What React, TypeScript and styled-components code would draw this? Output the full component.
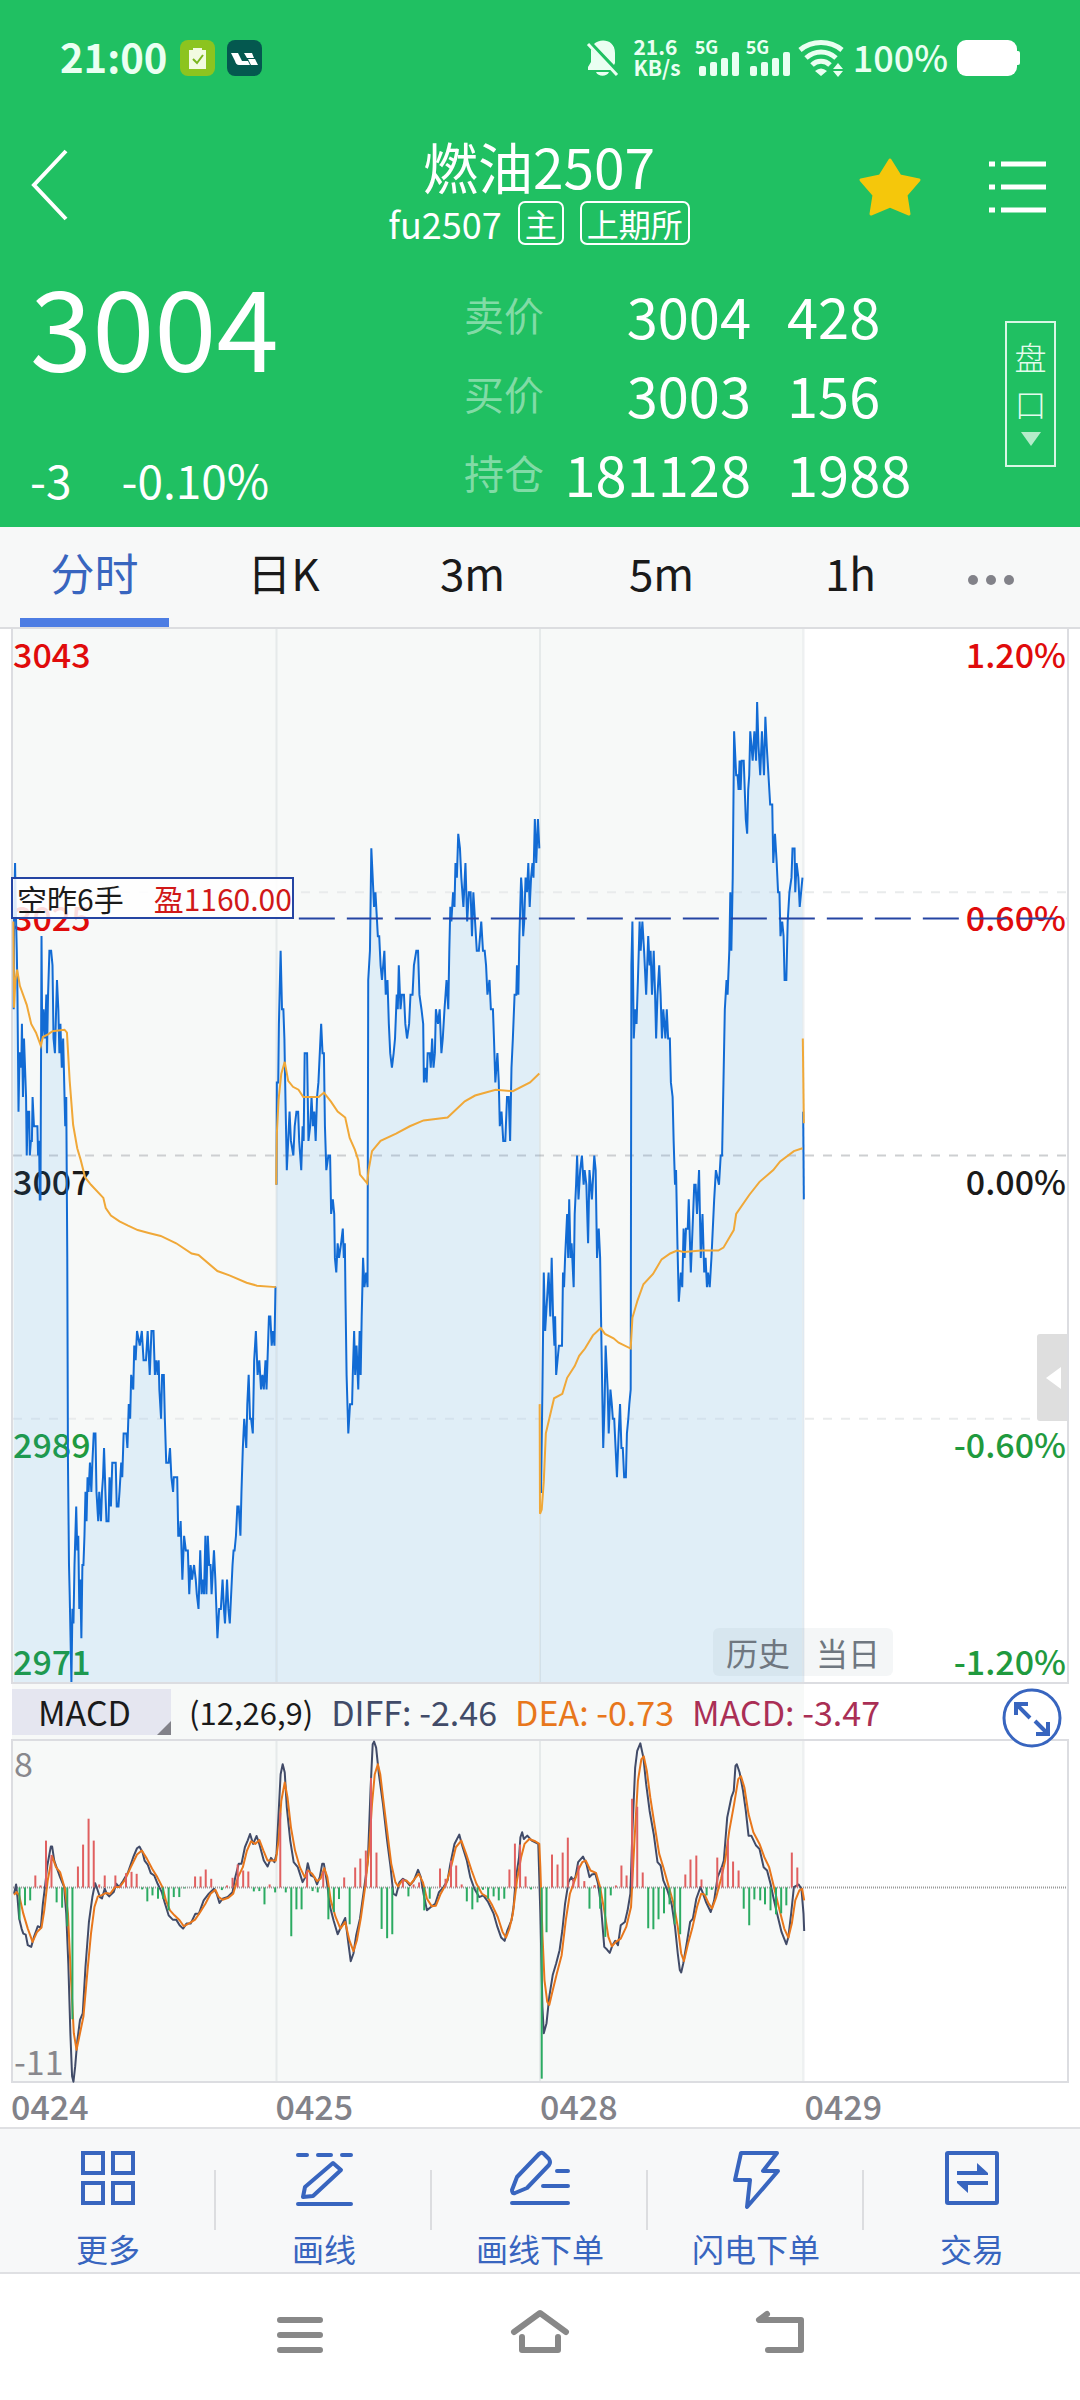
import React from 'react';
import styled, { createGlobalStyle } from 'styled-components';

/* ---------- market data ---------- */

type Pt = [number, number];

// One trading day is 767 slots wide, four days fit across the plot.
const DAY = 767;
const SPAN = DAY * 4;
const HIGH = 3043;
const LOW = 2971;
const ENTRY = 3023.2;

const offset = (pts: Pt[], dx: number): Pt[] => pts.map(([x, y]) => [x + dx, y]);

const price24: Pt[] = [[37,3017],[38,3023],[41,3027],[43,3024],[46,3021],[48,3018],[51,3010],[54,3014],[57,3014],[59,3013],[61,3016],[64,3011],[67,3015],[70,3013],[73,3011],[75,3007],[78,3010],[82,3010],[84,3007],[87,3008],[90,3008],[92,3011],[96,3009],[106,3009],[108,3007],[111,3008],[113,3004],[115,3004],[118,3022],[120,3015],[124,3017],[128,3015],[132,3018],[134,3014],[137,3018],[141,3021],[146,3021],[150,3020],[153,3015],[157,3014],[163,3019],[167,3017],[170,3014],[173,3016],[177,3013],[181,3015],[184,3012],[187,3009],[190,3011],[193,3000],[195,2986],[198,2979],[200,2977],[205,2971],[208,2976],[211,2975],[214,2979],[219,2983],[222,2980],[225,2981],[228,2976],[231,2978],[234,2974],[237,2979],[240,2979],[243,2981],[246,2984],[249,2982],[252,2985],[255,2984],[259,2986],[263,2984],[266,2986],[270,2988],[275,2988],[278,2984],[283,2982],[286,2984],[291,2982],[294,2984],[297,2985],[300,2987],[304,2984],[307,2982],[313,2982],[316,2985],[320,2983],[324,2986],[334,2986],[337,2983],[342,2983],[345,2984],[350,2986],[353,2985],[357,2988],[365,2988],[368,2987],[372,2990],[376,2989],[379,2992],[385,2991],[388,2994],[392,2993],[396,2995],[404,2994],[410,2995],[415,2993],[422,2993],[427,2995],[433,2992],[438,2995],[444,2995],[448,2992],[452,2993],[456,2992],[459,2993],[461,2991],[466,2989],[469,2992],[474,2992],[477,2989],[481,2986],[488,2986],[492,2987],[496,2985],[501,2984],[503,2985],[513,2985],[516,2981],[520,2981],[523,2982],[528,2978],[533,2981],[538,2980],[544,2980],[548,2977],[552,2979],[556,2978],[562,2979],[567,2978],[570,2977],[575,2976],[580,2980],[584,2977],[588,2978],[591,2977],[595,2981],[598,2977],[602,2981],[606,2979],[610,2979],[613,2977],[620,2980],[624,2978],[630,2974],[635,2976],[640,2976],[645,2978],[649,2976],[652,2975],[658,2978],[662,2976],[666,2975],[670,2977],[674,2979],[677,2980],[680,2980],[684,2981],[688,2983],[692,2983],[697,2981],[700,2984],[704,2987],[708,2989],[714,2987],[717,2990],[721,2992],[725,2989],[728,2989],[733,2988],[737,2993],[742,2995],[747,2992],[752,2993],[757,2991],[761,2992],[765,2991],[770,2993],[773,2991],[780,2996],[784,2996],[788,2994],[792,2995],[796,2994],[799,2998],[801,2998]];

const price25: Pt[] = [[802,3005],[803,3012],[807,3012],[809,3016],[814,3021],[818,3017],[822,3017],[825,3015],[828,3011],[832,3006],[836,3008],[840,3010],[844,3008],[851,3007],[855,3009],[860,3010],[865,3010],[868,3008],[874,3006],[878,3009],[881,3008],[884,3014],[891,3014],[895,3008],[900,3009],[904,3011],[908,3009],[912,3010],[916,3008],[920,3011],[924,3012],[928,3014],[932,3016],[936,3014],[940,3014],[943,3009],[947,3006],[953,3007],[958,3007],[961,3003],[966,3004],[970,3003],[972,3000],[976,2999],[980,3001],[984,3000],[990,3001],[995,3002],[998,3000],[1001,3001],[1003,2997],[1006,2992],[1011,2988],[1016,2990],[1022,2990],[1024,2992],[1028,2995],[1031,2992],[1035,2994],[1040,2991],[1044,2995],[1047,2992],[1050,2996],[1054,3000],[1058,2998],[1063,2999],[1067,2998],[1069,3019],[1074,3021],[1078,3028],[1082,3026],[1086,3024],[1090,3025],[1097,3022],[1101,3022],[1105,3020],[1109,3019],[1116,3021],[1120,3018],[1125,3019],[1129,3016],[1133,3014],[1138,3013],[1143,3014],[1147,3015],[1152,3018],[1155,3017],[1158,3020],[1163,3017],[1167,3018],[1173,3018],[1177,3016],[1182,3015],[1188,3016],[1192,3018],[1198,3018],[1202,3020],[1209,3021],[1214,3021],[1218,3018],[1224,3017],[1229,3016],[1231,3012],[1235,3013],[1239,3012],[1242,3014],[1248,3014],[1251,3013],[1255,3015],[1259,3013],[1263,3014],[1266,3017],[1272,3016],[1277,3017],[1282,3014],[1286,3015],[1291,3017],[1297,3019],[1302,3017],[1305,3021],[1308,3024],[1311,3023],[1316,3025],[1320,3024],[1323,3027],[1327,3026],[1331,3029],[1336,3028],[1340,3026],[1346,3024],[1352,3027],[1357,3023],[1362,3025],[1367,3025],[1371,3022],[1375,3025],[1380,3023],[1385,3021],[1391,3021],[1398,3023],[1403,3021],[1408,3021],[1412,3020],[1416,3018],[1422,3019],[1426,3017],[1432,3017],[1435,3015],[1439,3012],[1445,3014],[1449,3012],[1452,3009],[1457,3010],[1462,3008],[1468,3008],[1473,3011],[1478,3011],[1482,3008],[1486,3013],[1490,3015],[1495,3018],[1500,3018],[1502,3020],[1506,3018],[1509,3022],[1514,3026],[1517,3025],[1520,3022],[1523,3023],[1527,3026],[1531,3025],[1535,3027],[1539,3024],[1543,3026],[1547,3027],[1550,3026],[1554,3030],[1558,3027],[1563,3030],[1567,3028]];

const price28: Pt[] = [[1,2984],[4,2984],[8,2991],[12,2999],[16,2995],[21,2997],[26,2999],[31,2996],[35,3000],[39,2996],[43,2994],[45,2996],[48,2992],[52,2993],[56,2994],[65,2994],[68,2999],[71,2998],[74,3000],[80,3003],[83,3000],[86,3004],[90,3000],[93,3001],[99,2998],[102,3003],[106,3005],[109,3007],[113,3004],[118,3006],[123,3007],[128,3005],[131,3006],[136,3005],[141,3001],[145,3006],[152,3004],[159,3007],[163,3006],[167,3000],[172,3002],[176,3000],[180,2994],[185,2987],[189,2990],[192,2994],[198,2991],[201,2988],[206,2991],[210,2990],[213,2989],[217,2989],[221,2987],[225,2985],[230,2988],[234,2990],[238,2987],[242,2987],[246,2985],[251,2985],[254,2988],[258,2989],[261,2990],[265,2991],[267,3020],[270,3023],[274,3015],[278,3017],[282,3016],[286,3019],[291,3023],[294,3021],[299,3023],[304,3021],[310,3018],[316,3022],[320,3020],[323,3021],[327,3018],[332,3021],[336,3018],[339,3015],[343,3018],[348,3020],[352,3018],[356,3015],[360,3017],[363,3016],[366,3015],[370,3017],[374,3015],[379,3015],[382,3012],[387,3011],[390,3008],[394,3005],[397,3006],[401,3001],[405,2997],[411,2999],[415,2998],[419,3002],[422,3000],[426,3002],[431,3002],[434,3004],[440,2999],[445,3002],[450,3005],[454,3005],[458,3003],[464,3006],[469,3000],[474,3003],[479,2999],[483,3000],[487,2998],[490,2999],[495,2998],[500,3000],[504,3002],[508,3004],[513,3006],[522,3005],[527,3007],[531,3007],[535,3012],[539,3017],[544,3019],[547,3018],[552,3021],[555,3025],[558,3021],[562,3026],[566,3036],[572,3033],[576,3033],[579,3032],[582,3034],[585,3032],[588,3034],[594,3034],[597,3032],[600,3030],[604,3029],[607,3032],[610,3033],[613,3036],[620,3034],[625,3036],[630,3034],[633,3038],[637,3035],[642,3033],[647,3036],[653,3033],[657,3037],[661,3035],[666,3033],[671,3031],[677,3031],[680,3027],[685,3029],[690,3027],[694,3025],[698,3025],[701,3022],[706,3023],[710,3022],[713,3019],[718,3019],[722,3023],[727,3025],[733,3026],[736,3028],[742,3028],[744,3025],[748,3027],[753,3026],[757,3024],[761,3025],[765,3026]];

const average24: Pt[] = [[36,3023],[38,3017.1],[42,3019],[47,3019.7],[55,3018.6],[75,3017.3],[88,3016],[102,3015.4],[116,3014.5],[122,3015.1],[138,3015.3],[150,3015.5],[185,3015.6],[192,3015.4],[200,3012.1],[210,3009.1],[222,3007.5],[232,3006.7],[245,3005.5],[262,3005],[298,3004.1],[305,3003.4],[320,3002.9],[345,3002.5],[370,3002.2],[398,3001.9],[430,3001.7],[465,3001.5],[510,3001],[555,3000.3],[575,3000.2],[630,2999.1],[665,2998.8],[715,2998.3],[745,2998.1],[800,2998]];

const average25: Pt[] = [[801,3005],[803,3008.5],[808,3010.8],[816,3012.6],[826,3013.4],[836,3012.1],[850,3011.7],[866,3011.5],[880,3011],[925,3011],[940,3011.3],[960,3010.7],[980,3010],[1002,3009.6],[1015,3008.2],[1030,3007.4],[1040,3006.7],[1045,3005.7],[1066,3005.1],[1070,3006],[1080,3007.3],[1105,3008],[1150,3008.5],[1190,3009],[1230,3009.4],[1300,3009.6],[1350,3010.7],[1380,3011.1],[1440,3011.5],[1490,3011.4],[1540,3012],[1567,3012.6]];

const average28: Pt[] = [[0,2990],[1,2982.5],[6,2982.8],[12,2984.7],[18,2988],[30,2989.2],[42,2990.4],[66,2990.7],[80,2991.8],[102,2992.6],[115,2993.3],[132,2993.8],[155,2994.7],[178,2995.2],[190,2994.8],[215,2994.5],[230,2994.2],[265,2993.8],[270,2995.9],[285,2997.1],[302,2998.2],[330,2998.9],[355,2999.9],[380,3000.3],[400,3000.5],[420,3000.4],[470,3000.5],[520,3000.5],[535,3000.7],[565,3001.9],[572,3003],[610,3004.3],[640,3005.2],[680,3006],[700,3006.6],[740,3007.3],[765,3007.5]];

const average29: Pt[] = [[766,3015],[769,3009.2]];
const price29: Pt[] = [[767,3010],[769,3004]];

// Indicator values use a downward axis whose zero level is 621.
const ZERO = 621;

const diffEarly: Pt[] = [[38,640],[44,612],[48,650],[53,715],[60,745],[65,760],[72,763],[78,795],[88,800],[96,770],[103,750],[107,738],[116,742],[122,670],[128,620],[135,555],[145,498],[149,498],[155,540],[165,570],[172,590],[184,620],[190,700],[196,850],[202,1060],[207,1190],[211,1206],[216,1160],[222,1085],[230,1020],[238,1000],[246,860],[256,725],[266,650],[274,608],[280,625],[288,650],[294,654],[302,625],[308,640],[315,648],[328,635],[336,610],[344,620],[356,600],[370,575],[385,530],[396,503],[403,498],[412,515],[418,540],[427,552],[436,578],[446,585],[456,610],[468,635],[476,665],[488,705],[500,718],[510,718],[520,735],[530,745],[540,730],[552,730],[566,700],[576,700],[590,660],[605,640],[620,625],[628,640],[636,668],[645,655],[660,650],[674,635],[682,590],[692,550],[700,550],[710,500],[718,480],[725,460],[734,490],[744,466],[752,490],[765,540],[776,558],[786,532],[796,545],[802,520],[808,400],[814,280],[820,250],[826,275],[832,380],[842,480],[852,545],[864,560],[878,605],[886,590],[893,548],[902,585],[912,590],[920,612],[928,590],[935,550],[940,550],[948,600],[958,680],[968,720],[980,762],[992,735],[1002,713],[1010,780],[1018,843],[1026,820],[1034,765],[1045,715],[1055,640],[1068,540],[1076,320],[1082,190],[1086,182],[1092,200],[1100,280],[1112,370],[1124,480],[1134,560],[1142,640],[1150,645],[1160,605],[1170,595],[1180,602],[1190,615],[1202,600],[1214,568],[1222,590],[1230,640],[1240,690],[1254,678],[1264,670],[1275,635],[1288,620],[1300,600],[1308,550],[1320,490],[1334,462],[1344,500],[1356,540],[1366,590],[1378,625],[1392,650],[1404,645],[1418,665],[1434,700],[1445,740],[1456,772],[1466,782],[1474,750],[1486,720],[1492,680],[1498,600],[1508,530],[1512,470],[1517,455],[1522,475],[1532,465],[1545,480],[1564,490]];

const diffLate: Pt[] = [[2,700],[8,980],[12,1060],[20,1030],[28,950],[38,885],[48,850],[58,810],[66,750],[74,670],[84,605],[92,590],[98,600],[104,590],[112,545],[126,528],[136,550],[145,590],[152,582],[162,580],[170,610],[178,670],[188,800],[196,808],[204,818],[212,795],[220,782],[228,795],[236,735],[248,725],[256,690],[264,640],[270,450],[278,260],[284,210],[293,187],[302,230],[310,310],[320,390],[332,460],[343,545],[352,555],[360,600],[372,630],[384,670],[394,740],[402,820],[408,870],[412,877],[418,850],[428,790],[438,725],[446,715],[456,655],[468,620],[474,635],[484,665],[498,695],[508,660],[518,590],[530,560],[536,540],[546,410],[558,350],[565,330],[570,255],[574,250],[582,275],[592,330],[600,390],[608,465],[616,465],[630,495],[640,505],[652,560],[662,570],[672,610],[680,650],[690,695],[704,755],[718,792],[724,770],[732,700],[740,620],[754,612],[762,625],[768,700],[770,752]];

const deaEarly: Pt[] = [[38,643],[46,635],[53,645],[65,700],[78,745],[92,785],[105,755],[118,742],[126,690],[136,600],[149,527],[160,560],[172,575],[186,625],[195,700],[204,900],[212,1060],[220,1110],[228,1070],[240,1010],[252,870],[262,760],[272,680],[282,648],[292,645],[305,638],[318,640],[332,620],[345,620],[360,600],[378,560],[396,522],[410,510],[425,535],[440,565],[455,590],[470,620],[480,660],[492,690],[505,705],[520,720],[532,738],[550,728],[565,718],[580,695],[595,670],[610,640],[624,628],[634,650],[645,658],[662,652],[676,640],[690,590],[704,560],[716,510],[728,482],[740,490],[752,478],[764,510],[776,540],[788,540],[800,540],[808,480],[816,360],[826,305],[834,350],[844,440],[856,510],[870,560],[884,590],[894,570],[906,580],[920,602],[930,595],[941,563],[950,590],[960,660],[974,710],[988,745],[1002,725],[1014,780],[1026,813],[1036,780],[1048,710],[1060,620],[1072,500],[1080,370],[1088,280],[1097,250],[1104,280],[1112,350],[1124,450],[1136,550],[1148,605],[1156,618],[1168,600],[1180,600],[1192,612],[1204,595],[1216,580],[1228,605],[1240,655],[1254,678],[1266,676],[1280,640],[1296,610],[1310,560],[1324,500],[1340,480],[1354,520],[1370,570],[1384,610],[1400,640],[1416,650],[1430,675],[1446,710],[1460,755],[1470,772],[1480,745],[1490,700],[1502,600],[1514,530],[1524,490],[1538,475],[1555,482],[1567,490]];

const deaLate: Pt[] = [[2,560],[8,760],[14,900],[22,965],[28,975],[36,940],[50,880],[64,825],[76,720],[88,640],[102,600],[114,565],[124,545],[134,540],[148,570],[164,577],[176,620],[188,690],[200,770],[210,798],[222,785],[236,775],[252,740],[266,680],[276,480],[286,300],[296,235],[303,226],[312,270],[322,350],[334,430],[348,520],[360,560],[376,620],[390,670],[402,740],[412,820],[420,843],[432,790],[444,745],[458,680],[470,640],[480,642],[492,670],[502,684],[514,650],[528,595],[540,540],[552,450],[566,370],[578,295],[586,286],[596,320],[608,400],[622,455],[640,490],[654,530],[668,560],[682,620],[696,680],[712,745],[724,772],[734,730],[744,660],[756,630],[764,625],[770,660]];

const barsEarly: Pt[] = [[54,718],[70,675],[85,660],[100,585],[115,615],[131,480],[147,523],[162,666],[178,682],[193,738],[208,1018],[224,558],[239,492],[255,414],[270,480],[286,612],[302,585],[333,585],[348,615],[364,578],[380,574],[395,580],[411,627],[426,663],[441,645],[457,655],[472,655],[488,690],[503,650],[519,650],[534,624],[565,588],[581,588],[596,567],[612,595],[643,629],[658,615],[674,592],[689,552],[705,570],[720,573],[736,633],[752,632],[767,672],[782,612],[798,636],[813,396],[829,636],[845,768],[860,687],[875,687],[891,570],[907,632],[922,636],[938,573],[953,717],[969,695],[984,656],[999,591],[1015,732],[1031,561],[1046,534],[1062,510],[1077,291],[1093,516],[1108,746],[1124,774],[1139,762],[1170,595],[1186,648],[1201,612],[1217,606],[1232,690],[1248,655],[1278,564],[1294,595],[1310,540],[1325,555],[1341,612],[1356,663],[1372,687],[1387,666],[1403,628],[1418,655],[1434,648],[1449,660],[1465,655],[1480,567],[1496,489],[1511,492],[1527,588],[1543,627]];

const barsLate: Pt[] = [[6,1197],[20,756],[36,522],[52,552],[67,516],[82,471],[98,595],[113,555],[130,602],[145,685],[160,614],[176,685],[191,770],[207,645],[222,615],[238,555],[253,585],[269,354],[284,378],[300,576],[316,744],[331,747],[346,717],[362,699],[378,672],[393,732],[409,762],[424,582],[439,537],[456,525],[471,597],[486,645],[501,628],[517,531],[532,560],[548,480],[563,543],[579,570],[594,685],[610,735],[625,657],[642,660],[656,672],[672,690],[688,702],[703,699],[718,675],[734,516],[750,561]];

const EARLY = -35;
const LATE = 1533;

const priceDays = [offset(price24, EARLY), offset(price25, EARLY), offset(price28, LATE), offset(price29, LATE)];
const averageDays = [
  offset(average24, EARLY),
  offset(average25, EARLY),
  offset(average28, LATE),
  offset(average29, LATE),
];
const diffLine = [...offset(diffEarly, EARLY), ...offset(diffLate, LATE)];
const deaLine = [...offset(deaEarly, EARLY), ...offset(deaLate, LATE)];
const histogram = [...offset(barsEarly, EARLY), ...offset(barsLate, LATE)];

const priceY = (p: number) => (HIGH - p) * 10;
const PRICE_HEIGHT = priceY(LOW);
const toPath = (pts: Pt[]) => 'M' + pts.map(([x, y]) => `${x} ${y}`).join('L');
const pricePath = (pts: Pt[]) => toPath(pts.map(([x, p]) => [x, Math.round(priceY(p))]));
const areaPath = (pts: Pt[]) =>
  `${pricePath(pts)}L${pts[pts.length - 1][0]} ${PRICE_HEIGHT}L${pts[0][0]} ${PRICE_HEIGHT}Z`;

/* ---------- styles ---------- */

const GlobalStyle = createGlobalStyle`
  *, *::before, *::after { box-sizing: border-box; }
  body {
    margin: 0;
    background: #ffffff;
    color: #1a1a1a;
    font-family: "Noto Sans CJK SC", "Noto Sans", sans-serif;
  }
  button {
    margin: 0;
    padding: 0;
    border: 0;
    background: none;
    color: inherit;
    font: inherit;
  }
  svg { display: block; overflow: visible; }
`;

const Page = styled.div`
  display: flex;
  flex-direction: column;
  background: #ffffff;
`;

const Header = styled.header`
  background: #20c062;
  color: #ffffff;
`;

const StatusBar = styled.div`
  display: flex;
  align-items: center;
  justify-content: space-between;
  height: 116px;
  padding: 0 60px;
  color: #eafff2;
`;

const StatusGroup = styled.div<{ $gap: number }>`
  display: flex;
  align-items: center;
  gap: ${(p) => p.$gap}px;
`;

const Clock = styled.span`
  font-size: 40px;
  font-weight: 700;
  line-height: 40px;
  padding-bottom: 4px;
`;

const NetSpeed = styled.span`
  display: flex;
  flex-direction: column;
  margin: 0 7px 0 6px;
  padding-bottom: 2px;
  font-size: 21px;
  font-weight: 700;
  line-height: 21px;
`;

const Signal = styled.span`
  position: relative;
  display: block;
`;

const SignalLabel = styled.span`
  position: absolute;
  top: -3px;
  left: -2px;
  font-size: 18px;
  font-weight: 700;
  line-height: 18px;
`;

const BatteryText = styled.span`
  font-size: 36px;
  font-weight: 500;
  line-height: 36px;
  padding-bottom: 4px;
`;

const TitleBar = styled.div`
  display: grid;
  grid-template-columns: 1fr auto 1fr;
  align-items: center;
  height: 142px;
  padding: 0 34px 0 32px;
`;

const TitleActions = styled.div`
  display: flex;
  align-items: center;
  justify-content: flex-end;
  gap: 68px;
`;

const TitleBlock = styled.div`
  display: flex;
  flex-direction: column;
  align-items: center;
  gap: 6px;
  padding-top: 6px;
`;

const Title = styled.h1`
  margin: 0;
  font-size: 55px;
  font-weight: 400;
  line-height: 60px;
`;

const Subtitle = styled.div`
  display: flex;
  align-items: center;
  gap: 16px;
  font-size: 36px;
  line-height: 44px;
`;

const Tag = styled.span`
  padding: 0 5px;
  border: 2px solid #ffffff;
  border-radius: 7px;
  font-size: 32px;
  line-height: 40px;
`;

const Quote = styled.section`
  display: flex;
  padding: 17px 24px 15px 30px;
`;

const PriceBlock = styled.div`
  flex: 1;
  display: flex;
  flex-direction: column;
  justify-content: space-between;
`;

const LastPrice = styled.div`
  font-size: 112px;
  line-height: 96px;
`;

const Change = styled.div`
  display: flex;
  gap: 50px;
  font-size: 46px;
  line-height: 66px;
`;

const QuoteTable = styled.table`
  width: 445px;
  margin-right: 96px;
  border-collapse: collapse;
  table-layout: fixed;
  font-size: 56px;
  line-height: 79px;

  th, td { padding: 0; white-space: nowrap; }
  th {
    width: 82px;
    color: rgba(255, 255, 255, 0.45);
    font-size: 40px;
    font-weight: 400;
    text-align: left;
  }
`;

const PriceCell = styled.td`
  width: 205px;
  text-align: right;
`;

const SizeCell = styled.td`
  && { padding-left: 36px; }
`;

const DepthButton = styled.button`
  align-self: center;
  display: flex;
  flex-direction: column;
  align-items: center;
  gap: 10px;
  width: 51px;
  padding: 15px 0 19px;
  border: 2px solid #d9f7e5;
  color: #e4fbed;
  font-size: 32px;
  font-weight: 300;
  line-height: 37px;
`;

const Tabs = styled.nav`
  display: grid;
  grid-template-columns: repeat(5, minmax(0, 7fr)) minmax(0, 5fr);
  height: 102px;
  border-bottom: 2px solid #dcdde0;
  background: #f7f8f8;
`;

const Tab = styled.button<{ $active?: boolean }>`
  position: relative;
  padding-bottom: 10px;
  color: ${(p) => (p.$active ? '#3865bf' : '#1a1a1a')};
  font-size: 44px;

  &::after {
    content: '';
    position: absolute;
    right: 20px;
    bottom: 0;
    left: 20px;
    height: 9px;
    background: ${(p) => (p.$active ? '#4d7de3' : 'transparent')};
  }
`;

const MoreTab = styled.button`
  display: flex;
  align-items: center;
  justify-content: center;
  padding: 6px 43px 0 0;
`;

const Charts = styled.main`
  margin: 0 11px;
`;

const zones = 'linear-gradient(90deg, #f7f9f8 75%, #ffffff 75%)';

const PricePlot = styled.section`
  position: relative;
  height: 1055px;
  border: 2px solid #dcdde1;
  border-top: 0;
  background: ${zones};
`;

const PlotSvg = styled.svg`
  position: absolute;
  inset: 0;
  width: 100%;
  height: 100%;
`;

const Scale = styled.div`
  display: grid;
  grid-template-rows: repeat(4, 1fr);
  height: 100%;
  padding: 0 1px 0 0;
  font-size: 34px;
  font-weight: 500;
  line-height: 40px;
`;

const ScaleRow = styled.div`
  display: grid;
  grid-template-columns: 1fr 1fr;
  align-content: space-between;
  padding: 5px 0 1px;
`;

const ScaleLabel = styled.span<{ $tone: 'up' | 'flat' | 'down'; $right?: boolean }>`
  color: ${(p) => ({ up: '#e00b0b', flat: '#1a1a1a', down: '#1f9a3e' })[p.$tone]};
  text-align: ${(p) => (p.$right ? 'right' : 'left')};
`;

const PositionTag = styled.div`
  position: absolute;
  left: -2px;
  display: flex;
  gap: 30px;
  padding: 0 0 0 4px;
  border: 2px solid #2545a3;
  background: rgba(255, 255, 255, 0.86);
  font-size: 30px;
  line-height: 38px;
`;

const Profit = styled.span`
  color: #d01818;
`;

const RangeSwitch = styled.div`
  position: absolute;
  right: 174px;
  bottom: 6px;
  display: flex;
  border-radius: 6px;
  background: rgba(120, 140, 150, 0.08);
`;

const RangeButton = styled.button`
  width: 90px;
  color: #6f7780;
  font-size: 32px;
  line-height: 48px;
`;

const Drawer = styled.button`
  position: absolute;
  right: 0;
  bottom: 261px;
  width: 30px;
  height: 87px;
  border-radius: 3px 0 0 3px;
  background: #dedede;
`;

const IndicatorBar = styled.div`
  position: relative;
  display: flex;
  align-items: center;
  gap: 18px;
  height: 55px;
  margin: 0 1px;
  background: ${zones};
  font-size: 34px;
  line-height: 44px;
`;

const IndicatorButton = styled.button`
  position: relative;
  width: 159px;
  height: 46px;
  padding-right: 14px;
  background: #e5e6f0;
  line-height: 40px;

  &::after {
    content: '';
    position: absolute;
    right: 0;
    bottom: 0;
    border: 7px solid #828289;
    border-top-color: transparent;
    border-left-color: transparent;
  }
`;

const Params = styled.span`
  font-size: 31px;
`;

const Reading = styled.span<{ $color: string }>`
  color: ${(p) => p.$color};
`;

const ExpandButton = styled.button`
  position: absolute;
  top: 4px;
  right: 6px;
  z-index: 1;
`;

const MacdPlot = styled.section`
  position: relative;
  display: flex;
  flex-direction: column;
  justify-content: space-between;
  height: 344px;
  padding: 2px 1px 0;
  border: 2px solid #dcdde1;
  background: ${zones};
  color: #88888d;
  font-size: 34px;
  line-height: 40px;
`;

const Dates = styled.div`
  display: grid;
  grid-template-columns: repeat(4, 1fr);
  height: 44px;
  color: #828289;
  font-size: 34px;
  font-weight: 500;
  line-height: 46px;
`;

const Toolbar = styled.nav`
  display: flex;
  height: 147px;
  border: solid #dfe0e3;
  border-width: 2px 0;
  background: #f7f8f9;
`;

const ToolButton = styled.button`
  position: relative;
  flex: 1;
  display: flex;
  flex-direction: column;
  align-items: center;
  gap: 22px;
  padding-top: 19px;
  color: #3865bf;
  font-size: 32px;
  line-height: 36px;
  white-space: nowrap;

  & + &::before {
    content: '';
    position: absolute;
    top: 41px;
    left: -2px;
    width: 2px;
    height: 60px;
    background: #dcdde0;
  }
`;

const SystemNav = styled.nav`
  display: flex;
  align-items: center;
  justify-content: center;
  gap: 180px;
  height: 126px;
`;

/* ---------- icons ---------- */

const SignalIcon = () => (
  <Signal>
    <svg width="42" height="36" fill="currentColor" aria-hidden="true">
      <rect x="2" y="26" width="7" height="10" rx="2" />
      <rect x="13" y="22" width="7" height="14" rx="2" />
      <rect x="24" y="18" width="7" height="18" rx="2" />
      <rect x="35" y="12" width="7" height="24" rx="2" />
    </svg>
    <SignalLabel>5G</SignalLabel>
  </Signal>
);

const BellOffIcon = () => (
  <svg width="31" height="36" viewBox="0 0 31 36" fill="currentColor" aria-hidden="true">
    <path d="M7 4C13-2 28-1 28 13v10l-1 2zM4 9l21 21H1v-3l3-5zM9 32h13c-2 5-11 5-13 0z" />
    <path d="M1 4l29 31" stroke="currentColor" strokeWidth="3" />
  </svg>
);

const WifiIcon = () => (
  <svg width="45" height="36" viewBox="0 0 45 36" aria-hidden="true">
    <g fill="none" stroke="currentColor" strokeWidth="5">
      <path d="M1 10C13 0 31 0 43 10" />
      <path d="M7 18c9-8 21-8 30 0" />
      <path d="M13 25c5-5 13-5 18 0" />
    </g>
    <path d="M16 31q6-5 12 0l-6 5zM34 29l5-6 5 6zM34 31h10l-5 6z" fill="currentColor" />
  </svg>
);

const toolIcon = { width: 60, height: 60, viewBox: '0 0 60 60', 'aria-hidden': true } as const;
const toolStroke = {
  fill: 'none',
  stroke: 'currentColor',
  strokeWidth: 4,
  strokeLinecap: 'round',
  strokeLinejoin: 'round',
} as const;

const tools = [
  {
    label: '更多',
    icon: (
      <svg {...toolIcon} fill="none" stroke="currentColor" strokeWidth="4">
        <path d="M5 5h20v20H5zM35 5h20v20H35zM5 35h20v20H5zM35 35h20v20H35z" />
      </svg>
    ),
  },
  {
    label: '画线',
    icon: (
      <svg {...toolIcon} {...toolStroke}>
        <path d="M4 7h9M24 7h13M48 7h9M4 56h53M39 15l8 7-28 26-10 1 2-10z" />
      </svg>
    ),
  },
  {
    label: '画线下单',
    icon: (
      <svg {...toolIcon} {...toolStroke}>
        <path d="M2 55h56M47 23h11M33 38h25M29 6q3-3 6 1l4 4q2 3 0 6L17 40 5 45q-3 1-3-3l5-13z" />
      </svg>
    ),
  },
  {
    label: '闪电下单',
    icon: (
      <svg {...toolIcon} {...toolStroke}>
        <path d="M15 5h36L37 23h15L21 59l3-27H9z" />
      </svg>
    ),
  },
  {
    label: '交易',
    icon: (
      <svg {...toolIcon}>
        <rect x="5" y="5" width="50" height="50" rx="1" fill="none" stroke="currentColor" strokeWidth="4" />
        <path d="M15 23h20v-8l11 10v2H15zM15 33h31v4H26v8L15 35z" fill="currentColor" />
      </svg>
    ),
  },
];

/* ---------- charts ---------- */

const rows = [
  { price: '3043', pct: '1.20%', tone: 'up' },
  { price: '3025', pct: '0.60%', tone: 'up' },
  { price: '3007', pct: '0.00%', tone: 'flat' },
  { price: '2989', pct: '-0.60%', tone: 'down' },
] as const;

const DayLines = ({ top, height }: { top: number; height: number }) => (
  <>
    {[1, 2, 3].map((d) => (
      <path
        key={d}
        d={`M${d * DAY} ${top}v${height}`}
        stroke="rgba(90, 110, 120, 0.1)"
        strokeWidth="2"
        vectorEffect="non-scaling-stroke"
      />
    ))}
  </>
);

const PriceChart = () => (
  <PlotSvg viewBox={`0 0 ${SPAN} ${PRICE_HEIGHT}`} preserveAspectRatio="none" fill="none" aria-hidden="true">
    {[3025, 3007, 2989].map((p) => (
      <path
        key={p}
        d={`M0 ${priceY(p)}H${SPAN}`}
        stroke={p === 3007 ? '#cdcfd1' : '#e9ebec'}
        strokeWidth="2"
        strokeDasharray="9 9"
        vectorEffect="non-scaling-stroke"
      />
    ))}
    {priceDays.map((pts, i) => (
      <path key={i} d={areaPath(pts)} fill="rgba(30, 150, 245, 0.1)" />
    ))}
    <DayLines top={0} height={PRICE_HEIGHT} />
    {priceDays.map((pts, i) => (
      <path key={i} d={pricePath(pts)} stroke="#126bd4" strokeWidth="2" vectorEffect="non-scaling-stroke" />
    ))}
    {averageDays.map((pts, i) => (
      <path key={i} d={pricePath(pts)} stroke="#f0a838" strokeWidth="2" vectorEffect="non-scaling-stroke" />
    ))}
    <path
      d={`M832 ${priceY(ENTRY)}H${SPAN}`}
      stroke="#2545a3"
      strokeWidth="2"
      strokeDasharray="36 12"
      vectorEffect="non-scaling-stroke"
    />
  </PlotSvg>
);

const MacdChart = () => (
  <PlotSvg viewBox={`0 180 ${SPAN} 1024`} preserveAspectRatio="none" fill="none" aria-hidden="true">
    <DayLines top={180} height={1024} />
    <path
      d={`M0 ${ZERO}H${SPAN}`}
      stroke="#9a9a9a"
      strokeWidth="2"
      strokeDasharray="1 1"
      vectorEffect="non-scaling-stroke"
    />
    <path d={toPath(diffLine)} stroke="#414b68" strokeWidth="2" strokeLinejoin="round" vectorEffect="non-scaling-stroke" />
    <path d={toPath(deaLine)} stroke="#e8771c" strokeWidth="2" strokeLinejoin="round" vectorEffect="non-scaling-stroke" />
    {histogram.map(([x, y]) => (
      <path
        key={x}
        d={`M${x} ${ZERO}V${y}`}
        stroke={y < ZERO ? '#e06060' : '#2bab62'}
        strokeWidth="2"
        vectorEffect="non-scaling-stroke"
      />
    ))}
  </PlotSvg>
);

/* ---------- page ---------- */

export default function App() {
  return (
    <Page>
      <GlobalStyle />
      <Header>
        <StatusBar>
          <StatusGroup $gap={13}>
            <Clock>21:00</Clock>
            <StatusGroup $gap={12}>
              <svg width="35" height="36" viewBox="0 0 35 36" aria-hidden="true">
                <rect width="35" height="36" rx="8" fill="#8cc41f" />
                <path d="M9 10h4V8h9v2h4v19H9z" fill="#f2fbe0" />
                <path d="M13 19l4 4 6-8" fill="none" stroke="#7ab51d" strokeWidth="2" />
              </svg>
              <svg width="35" height="36" viewBox="0 0 35 36" aria-hidden="true">
                <rect width="35" height="36" rx="8" fill="#04584f" />
                <path d="M4 13h7l4 8h6l2 4H12q-3 0-4-4zM17 13h8l2 5h-7zM21 19h7l3 6h-7z" fill="#ffffff" />
              </svg>
            </StatusGroup>
          </StatusGroup>
          <StatusGroup $gap={9}>
            <BellOffIcon />
            <NetSpeed>
              <span>21.6</span>
              <span>KB/s</span>
            </NetSpeed>
            <SignalIcon />
            <SignalIcon />
            <WifiIcon />
            <BatteryText>100%</BatteryText>
            <svg width="63" height="36" viewBox="0 0 63 36" fill="#ffffff" aria-hidden="true">
              <rect width="60" height="36" rx="9" />
              <rect x="56" y="11" width="7" height="14" rx="2" />
            </svg>
          </StatusGroup>
        </StatusBar>

        <TitleBar>
          <div>
            <button type="button" aria-label="返回">
              <svg width="35" height="70" viewBox="0 0 35 70" fill="none" stroke="#ffffff" strokeWidth="4">
                <path d="M34 1L2 35l32 34" />
              </svg>
            </button>
          </div>
          <TitleBlock>
            <Title>燃油2507</Title>
            <Subtitle>
              <span>fu2507</span>
              <Tag>主</Tag>
              <Tag>上期所</Tag>
            </Subtitle>
          </TitleBlock>
          <TitleActions>
            <button type="button" aria-label="自选">
              <svg width="62" height="58" viewBox="0 0 62 58" fill="#f5c70b" stroke="#f5c70b" strokeWidth="3" strokeLinejoin="round">
                <path d="M31 2l10 16 19 4-13 15 3 19-19-8-19 8 3-19L2 22l19-4z" />
              </svg>
            </button>
            <button type="button" aria-label="菜单">
              <svg width="57" height="52" viewBox="0 0 57 52" stroke="#ffffff" strokeWidth="5">
                <path d="M0 3h6M12 3h45M0 26h6M12 26h45M0 49h6M12 49h45" />
              </svg>
            </button>
          </TitleActions>
        </TitleBar>

        <Quote>
          <PriceBlock>
            <LastPrice>3004</LastPrice>
            <Change>
              <span>-3</span>
              <span>-0.10%</span>
            </Change>
          </PriceBlock>
          <QuoteTable>
            <tbody>
              <tr>
                <th scope="row">卖价</th>
                <PriceCell>3004</PriceCell>
                <SizeCell>428</SizeCell>
              </tr>
              <tr>
                <th scope="row">买价</th>
                <PriceCell>3003</PriceCell>
                <SizeCell>156</SizeCell>
              </tr>
              <tr>
                <th scope="row">持仓</th>
                <PriceCell>181128</PriceCell>
                <SizeCell>1988</SizeCell>
              </tr>
            </tbody>
          </QuoteTable>
          <DepthButton type="button">
            <span>盘</span>
            <span>口</span>
            <svg width="20" height="14" viewBox="0 0 20 14" fill="#b5ecca" aria-hidden="true">
              <path d="M0 0h20L10 14z" />
            </svg>
          </DepthButton>
        </Quote>
      </Header>

      <Tabs>
        <Tab type="button" $active>分时</Tab>
        <Tab type="button">日K</Tab>
        <Tab type="button">3m</Tab>
        <Tab type="button">5m</Tab>
        <Tab type="button">1h</Tab>
        <MoreTab type="button" aria-label="更多周期">
          <svg width="46" height="10" viewBox="0 0 46 10" fill="#828289">
            <circle cx="5" cy="5" r="5" />
            <circle cx="23" cy="5" r="5" />
            <circle cx="41" cy="5" r="5" />
          </svg>
        </MoreTab>
      </Tabs>

      <Charts>
        <PricePlot>
          <Scale>
            {rows.map((r) => (
              <ScaleRow key={r.price}>
                <ScaleLabel $tone={r.tone}>{r.price}</ScaleLabel>
                <ScaleLabel $tone={r.tone} $right>{r.pct}</ScaleLabel>
                {r.price === '2989' && (
                  <>
                    <ScaleLabel $tone="down">2971</ScaleLabel>
                    <ScaleLabel $tone="down" $right>-1.20%</ScaleLabel>
                  </>
                )}
              </ScaleRow>
            ))}
          </Scale>
          <PriceChart />
          <PositionTag style={{ bottom: `${((ENTRY - LOW) / (HIGH - LOW)) * 100}%` }}>
            <span>空昨6手</span>
            <Profit>盈1160.00</Profit>
          </PositionTag>
          <RangeSwitch>
            <RangeButton type="button">历史</RangeButton>
            <RangeButton type="button">当日</RangeButton>
          </RangeSwitch>
          <Drawer type="button" aria-label="展开">
            <svg width="30" height="22" viewBox="0 0 30 22" fill="#ffffff">
              <path d="M9 11L24 0v22z" />
            </svg>
          </Drawer>
        </PricePlot>

        <IndicatorBar>
          <IndicatorButton type="button">MACD</IndicatorButton>
          <Params>(12,26,9)</Params>
          <Reading $color="#414b68">DIFF: -2.46</Reading>
          <Reading $color="#e8771c">DEA: -0.73</Reading>
          <Reading $color="#aa2f55">MACD: -3.47</Reading>
          <ExpandButton type="button" aria-label="全屏">
            <svg width="60" height="60" viewBox="0 0 60 60" fill="none" stroke="#3865bf" strokeWidth="3">
              <circle cx="30" cy="30" r="28" fill="#ffffff" />
              <path d="M14 27V16h12M15 17l13 13M33 33l13 13M46 34v12H34" strokeWidth="4" />
            </svg>
          </ExpandButton>
        </IndicatorBar>

        <MacdPlot>
          <span>8</span>
          <span>-11</span>
          <MacdChart />
        </MacdPlot>

        <Dates>
          <span>0424</span>
          <span>0425</span>
          <span>0428</span>
          <span>0429</span>
        </Dates>
      </Charts>

      <Toolbar>
        {tools.map((t) => (
          <ToolButton key={t.label} type="button">
            {t.icon}
            <span>{t.label}</span>
          </ToolButton>
        ))}
      </Toolbar>

      <SystemNav>
        <button type="button" aria-label="最近任务">
          <svg width="60" height="60" viewBox="0 0 60 60" stroke="#888888" strokeWidth="6" strokeLinecap="round">
            <path d="M10 13h40M10 28h40M10 43h40" />
          </svg>
        </button>
        <button type="button" aria-label="主屏幕">
          <svg width="60" height="60" viewBox="0 0 60 60" fill="none" stroke="#888888" strokeWidth="6" strokeLinecap="round" strokeLinejoin="round">
            <path d="M4 25L30 6l26 19M12 30v13h36V30" />
          </svg>
        </button>
        <button type="button" aria-label="后退">
          <svg width="60" height="60" viewBox="0 0 60 60" fill="none" stroke="#888888" strokeWidth="6" strokeLinecap="round" strokeLinejoin="round">
            <path d="M17 7l-8 6h42v30H18" />
          </svg>
        </button>
      </SystemNav>
    </Page>
  );
}
